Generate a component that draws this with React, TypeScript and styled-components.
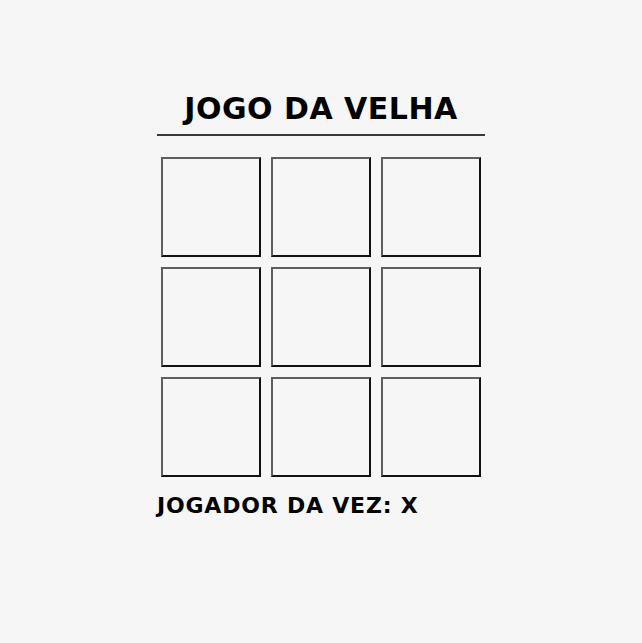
import React, { useState } from "react";
import styled, { createGlobalStyle } from "styled-components";

const GlobalStyle = createGlobalStyle`
  html, body {
    margin: 0;
    padding: 0;
    background: #f6f6f6;
  }
  body {
    font-family: "Comic Sans MS", "DejaVu Sans", sans-serif;
  }
`;

const Page = styled.div`
  display: flex;
  justify-content: center;
  padding-top: 90px;
`;

const Game = styled.div`
  width: 328px;
  display: flex;
  flex-direction: column;
`;

const Title = styled.h1`
  margin: 0;
  padding-bottom: 6px;
  border-bottom: 2px solid #3a3a3a;
  text-align: center;
  font-size: 30px;
  line-height: 38px;
  font-weight: bold;
  color: #000;
  letter-spacing: 0.5px;
`;

const Board = styled.div`
  display: grid;
  grid-template-columns: repeat(3, 100px);
  grid-auto-rows: 100px;
  gap: 10px;
  padding: 0 4px;
  margin-top: 21px;
`;

const Cell = styled.button`
  box-sizing: border-box;
  width: 100px;
  height: 100px;
  padding: 0;
  background: transparent;
  border-style: solid;
  border-width: 2px;
  border-color: #5e5e5e #111 #111 #5e5e5e;
  font-family: inherit;
  font-size: 56px;
  font-weight: bold;
  cursor: pointer;
`;

const Status = styled.div`
  margin-top: 14px;
  font-size: 22px;
  line-height: 30px;
  font-weight: bold;
  color: #000;
  letter-spacing: 0.8px;
`;

export default function App() {
  const [cells, setCells] = useState<string[]>(Array(9).fill(""));
  const [turn, setTurn] = useState<"X" | "O">("X");

  const play = (i: number) => {
    if (cells[i]) return;
    const next = cells.slice();
    next[i] = turn;
    setCells(next);
    setTurn(turn === "X" ? "O" : "X");
  };

  return (
    <>
      <GlobalStyle />
      <Page>
        <Game>
          <Title>JOGO DA VELHA</Title>
          <Board>
            {cells.map((c, i) => (
              <Cell key={i} onClick={() => play(i)}>
                {c}
              </Cell>
            ))}
          </Board>
          <Status>JOGADOR DA VEZ: {turn}</Status>
        </Game>
      </Page>
    </>
  );
}
